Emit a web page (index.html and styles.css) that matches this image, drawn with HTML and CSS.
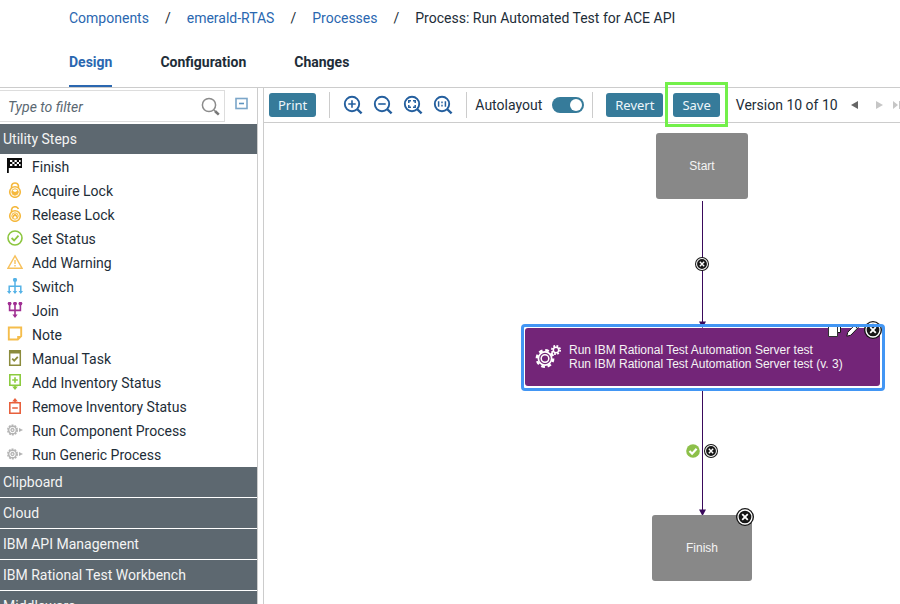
FILE: index.html
```html
<!DOCTYPE html>
<html lang="en">
<head>
<meta charset="utf-8">
<title>Process: Run Automated Test for ACE API</title>
<link rel="stylesheet" href="styles.css">
</head>
<body>
<svg class="defs" aria-hidden="true">
  <defs>
    <symbol id="close" viewBox="0 0 18 18">
      <circle cx="9" cy="9" r="9" fill="#161616"/>
      <circle cx="9" cy="9" r="7" fill="#161616" stroke="#fff" stroke-width="1.3"/>
      <path d="M6.2 6.2l5.6 5.6M11.8 6.2l-5.6 5.6" stroke="#fff" stroke-width="1.8"/>
    </symbol>
    <symbol id="lens" viewBox="0 0 20 20">
      <circle cx="9" cy="9" r="7.2" fill="none" stroke="currentColor" stroke-width="1.9"/>
      <path d="M14 14l4.6 4.4" stroke="currentColor" stroke-width="2.4"/>
    </symbol>
    <symbol id="run" viewBox="0 0 16 16">
      <circle cx="5.5" cy="8" r="4.7" fill="none" stroke="#b4b4b4" stroke-width="1.6" stroke-dasharray="1.9 1.05"/>
      <circle cx="5.5" cy="8" r="3.8" fill="none" stroke="#b4b4b4" stroke-width="1.4"/>
      <circle cx="5.5" cy="8" r="1.5" fill="none" stroke="#b4b4b4" stroke-width="1.3"/>
      <path d="M12 6l4 2-4 2z" fill="#b4b4b4"/>
    </symbol>
  </defs>
</svg>

<header class="header">
  <nav class="crumbs" aria-label="Breadcrumb">
    <a href="#">Components</a><span>/</span><a href="#">emerald-RTAS</a><span>/</span><a href="#">Processes</a><span>/</span><b>Process: Run Automated Test for ACE API</b>
  </nav>
  <nav class="tabs" aria-label="Sections">
    <a class="tab current" href="#">Design</a>
    <a class="tab" href="#">Configuration</a>
    <a class="tab" href="#">Changes</a>
  </nav>
</header>

<main class="main">
  <aside class="sidebar">
    <div class="filter">
      <div class="filter-box">
        <input type="text" placeholder="Type to filter" aria-label="Type to filter">
        <svg width="20" height="20" viewBox="0 0 20 20"><circle cx="8" cy="8" r="6.6" fill="none" stroke="#8b8b8b" stroke-width="1.5"/><path d="M13 13l1.6 1.6" stroke="#8b8b8b" stroke-width="1.5"/><path d="M14.2 14.2l3.6 3.4" stroke="#777" stroke-width="2.6"/></svg>
      </div>
      <button class="collapse" type="button" aria-label="Collapse all">
        <svg width="14" height="14" viewBox="0 0 14 14"><rect x="1" y="1.5" width="11" height="10" fill="none" stroke="#7ba6c9" stroke-width="1.6"/><path d="M4 6.5h5" stroke="#5f95c0" stroke-width="1.6"/></svg>
      </button>
    </div>
    <button class="section" type="button">Utility Steps</button>
    <ul class="steps">
      <li><svg viewBox="0 0 16 16"><path d="M0 0h15v10H1.8v5H0z" fill="#0b0b0b"/><path d="M3 2h2.300v2H3zM7.500 2h2.300v2H7.500zM12 2h1.600v2H12zM5.300 4h2.200v2H5.300zM9.800 4H12v2H9.800zM3 6h2.300v2H3zM7.500 6h2.300v2H7.500zM12 6h1.600v2H12z" fill="#fff"/></svg>Finish</li>
      <li><svg viewBox="0 0 16 16"><g fill="none" stroke="#f5b83d"><path d="M4.600 6V3.400a3.500 3.200 0 0 1 6.800 0V6" stroke-width="1.600"/><circle cx="8" cy="10" r="5.300" stroke-width="1.600"/><circle cx="8" cy="10" r="3.200" stroke-width="1"/></g><path d="M5 8.500l3 1.600 3-1.600a3.200 3.200 0 0 1-6 2.600z" fill="#f5b83d"/></svg>Acquire Lock</li>
      <li><svg viewBox="0 0 16 16"><g fill="none" stroke="#f5b83d"><path d="M4.600 6V3.400a3.500 3.200 0 0 1 6.800-.4" stroke-width="1.600"/><circle cx="8" cy="10" r="5.300" stroke-width="1.600"/><circle cx="8" cy="10" r="3.200" stroke-width="1"/></g><path d="M5 12l1-3 2-1.500L10 9l1 3-2-.5-.4-1.500H7.400L7 11.500z" fill="#f5b83d"/></svg>Release Lock</li>
      <li><svg viewBox="0 0 16 16"><circle cx="8" cy="8" r="7" fill="none" stroke="#8cc63f" stroke-width="1.600"/><path d="M4.600 8l2.500 2.500 4.400-4.800" fill="none" stroke="#8cc63f" stroke-width="1.800"/></svg>Set Status</li>
      <li><svg viewBox="0 0 16 16"><path d="M8 1.800l7 12.400H1z" fill="none" stroke="#f7c15c" stroke-width="1.400"/><path d="M8 6v4M8 11v1.600" stroke="#f7c15c" stroke-width="1.400"/></svg>Add Warning</li>
      <li><svg viewBox="0 0 16 16"><circle cx="8" cy="1.900" r="2.100" fill="#55b2e6"/><path d="M8 3v12M2.200 13.500V8.200h11.600v5.300" fill="none" stroke="#55b2e6" stroke-width="1.500"/><path d="M0 13h4.400l-2.200 3zM5.800 13h4.400L8 16zM11.600 13H16l-2.200 3z" fill="#55b2e6"/></svg>Switch</li>
      <li><svg viewBox="0 0 16 16"><g fill="#a02f92"><circle cx="2.600" cy="1.600" r="1.900"/><circle cx="8" cy="1.600" r="1.900"/><circle cx="13.400" cy="1.600" r="1.900"/><path d="M5.400 12.500h5.200L8 16z"/></g><path d="M2.600 2v6.400h10.800V2M8 2v12" fill="none" stroke="#a02f92" stroke-width="1.600"/></svg>Join</li>
      <li><svg viewBox="0 0 16 16"><path d="M1.800 1.500h12.400v8.700l-3.400 3.300h-9z" fill="none" stroke="#f5bd4c" stroke-width="1.900"/><path d="M10.200 14v-4h4z" fill="#f5bd4c"/></svg>Note</li>
      <li><svg viewBox="0 0 16 16"><path d="M2.700 1h10.600v14.200H2.700z" fill="none" stroke="#8b8b3c" stroke-width="1.500"/><path d="M2 0h12v3.500H2z" fill="#8b8b3c"/><path d="M5.200 8.700l2 2 3.600-3.900" fill="none" stroke="#8b8b3c" stroke-width="1.700"/></svg>Manual Task</li>
      <li><svg viewBox="0 0 16 16"><path d="M2.800.8h10.400v10.400H2.800zM8 3.200v5.600M5.200 6h5.600M8 11v3" fill="none" stroke="#8ccb3f" stroke-width="1.600"/><path d="M5.200 12.500h5.600L8 16z" fill="#8ccb3f"/></svg>Add Inventory Status</li>
      <li><svg viewBox="0 0 16 16"><path d="M2.800 4.800h10.400v10.400H2.800zM5.200 10h5.600M8 5V2" fill="none" stroke="#e8603c" stroke-width="1.600"/><path d="M5.200 3.400h5.600L8 0z" fill="#e8603c"/></svg>Remove Inventory Status</li>
      <li><svg viewBox="0 0 16 16"><use href="#run"/></svg>Run Component Process</li>
      <li><svg viewBox="0 0 16 16"><use href="#run"/></svg>Run Generic Process</li>
    </ul>
    <button class="section" type="button">Clipboard</button>
    <button class="section" type="button">Cloud</button>
    <button class="section" type="button">IBM API Management</button>
    <button class="section" type="button">IBM Rational Test Workbench</button>
    <button class="section" type="button">Middleware</button>
  </aside>

  <section class="editor">
    <div class="toolbar">
      <button class="btn" type="button">Print</button>
      <div class="group zooms">
        <button class="tool" type="button" aria-label="Zoom in"><svg viewBox="0 0 20 20"><use href="#lens"/><path d="M5.300 9h7.400M9 5.300v7.400" stroke="currentColor" stroke-width="1.600"/></svg></button>
        <button class="tool" type="button" aria-label="Zoom out"><svg viewBox="0 0 20 20"><use href="#lens"/><path d="M5.300 9h7.400" stroke="currentColor" stroke-width="1.600"/></svg></button>
        <button class="tool" type="button" aria-label="Zoom to fit"><svg viewBox="0 0 20 20"><use href="#lens"/><path d="M5.800 8V5.800H8M10 5.800h2.200V8M12.200 10v2.200H10M8 12.200H5.800V10" fill="none" stroke="currentColor" stroke-width="1.500"/></svg></button>
        <button class="tool" type="button" aria-label="Actual size"><svg viewBox="0 0 20 20"><use href="#lens"/><path d="M5.600 6.200v5.600M12.400 6.200v5.600" stroke="currentColor" stroke-width="1.500"/><path d="M9 6.500v1.800M9 9.800v1.800" stroke="currentColor" stroke-width="1.400"/></svg></button>
      </div>
      <div class="group auto">
        <label for="auto">Autolayout</label>
        <input id="auto" class="toggle" type="checkbox" checked>
      </div>
      <div class="group actions">
        <button class="btn" type="button">Revert</button>
        <span class="callout"><button class="btn" type="button">Save</button></span>
      </div>
      <div class="version">
        <span>Version 10 of 10</span>
        <button class="step" type="button" aria-label="Previous version"><svg viewBox="0 0 8 8"><path d="M7 0v8L0 4z" fill="#666"/></svg></button>
        <button class="step" type="button" aria-label="Next version"><svg viewBox="0 0 8 8"><path d="M1 0v8l7-4z" fill="#c6c6c6"/></svg></button>
        <button class="step last" type="button" aria-label="Latest version"><svg viewBox="0 0 8 8"><path d="M0 0v8l5-4zM6 0h2v8H6z" fill="#c6c6c6"/></svg></button>
      </div>
    </div>

    <div class="canvas">
      <svg class="edges" width="100%" height="100%" aria-hidden="true">
        <path d="M438.500 78v122M438.500 266v122" stroke="#3a0a5c"/>
        <path d="M435 198.500h7l-3.500 6.500zM435 386.500h7l-3.500 6.500z" fill="#3a0a5c"/>
      </svg>
      <div class="node start">Start</div>
      <div class="node task">
        <svg class="gears" width="28" height="28" viewBox="0 0 28 28" fill="none" stroke="#fff">
          <circle cx="11" cy="15.500" r="8.200" stroke-width="2.400" stroke-dasharray="3.700 2.740"/>
          <circle cx="11" cy="15.500" r="6.600" stroke-width="1.700"/>
          <circle cx="11" cy="15.500" r="3.800" stroke-width="1.500"/>
          <circle cx="22" cy="7" r="4.100" stroke-width="1.800" stroke-dasharray="1.800 1.420"/>
          <circle cx="22" cy="7" r="2.700" stroke-width="1.500"/>
        </svg>
        <div>Run IBM Rational Test Automation Server test<br>Run IBM Rational Test Automation Server test (v. 3)</div>
      </div>
      <div class="node finish">Finish</div>
      <div class="node-tools">
        <svg width="14" height="14" viewBox="0 0 14 14"><path d="M3.500 1.500h9v8h-9z" fill="#fff" stroke="#161616"/><path d="M.5 3.500h9v10h-9z" fill="#fff" stroke="#333"/></svg>
        <svg width="14" height="14" viewBox="0 0 14 14"><path d="M.8 13.200l1-4L9.500 1.200l3 3-7.700 8z" fill="#fff" stroke="#161616"/><path d="M8.300 2.400l3 3" stroke="#161616"/></svg>
        <svg width="18" height="18"><use href="#close"/></svg>
      </div>
      <div class="selection"></div>
      <svg class="mark drop-first" width="14" height="14"><use href="#close"/></svg>
      <svg class="mark ok" width="14" height="14" viewBox="0 0 14 14"><circle cx="7" cy="7" r="6.800" fill="#8dc04a"/><path d="M3.500 7l2.600 2.700 4.500-4.900" fill="none" stroke="#fff" stroke-width="2.200"/></svg>
      <svg class="mark drop-second" width="14" height="14"><use href="#close"/></svg>
      <svg class="mark drop-finish" width="18" height="18"><use href="#close"/></svg>
    </div>
  </section>
</main>
</body>
</html>
```
FILE: styles.css
```css
* { box-sizing: border-box; }

body {
  margin: 0;
  height: 100vh;
  overflow: hidden;
  display: flex;
  flex-direction: column;
  background: #fff;
  color: #1d2d38;
  font: 14px/20px Roboto, "Liberation Sans", sans-serif;
}

button, input { font: inherit; margin: 0; }
button { border: 0; padding: 0; background: none; cursor: pointer; }
a { color: #2a67b0; text-decoration: none; }
svg { display: block; flex: none; }
.defs { position: absolute; width: 0; height: 0; }

.header {
  padding: 8px 0 0 69px;
  border-bottom: 1px solid #ccc;
}
.crumbs { display: flex; gap: 16px; }
.crumbs b { font-weight: 400; }
.tabs { display: flex; gap: 48px; margin-top: 24px; }
.tab {
  height: 35px;
  color: #1d2d38;
  font-weight: 700;
  border-bottom: 2px solid transparent;
}
.tab.current { color: #2a67b0; border-color: #2a67b0; }

.main { flex: 1; min-height: 0; display: flex; gap: 5px; }

.sidebar {
  width: 258px;
  flex: none;
  overflow: hidden;
  border-right: 1px solid #ccc;
}
.filter { display: flex; gap: 10px; padding: 2px 0; }
.filter-box {
  flex: 0 0 225px;
  height: 32px;
  display: flex;
  align-items: center;
  border: 1px solid #ddd;
  border-left: 0;
  padding: 2px 3px 0 0;
}
.filter-box input {
  flex: 1;
  min-width: 0;
  border: 0;
  outline: 0;
  padding: 0 8px;
  background: none;
}
.filter-box input::placeholder { color: #5a6872; font-style: italic; opacity: 1; }
.collapse { align-self: flex-start; margin-top: 7px; }

.section {
  display: block;
  width: 100%;
  height: 30px;
  margin-bottom: 1px;
  padding: 0 3px;
  background: #5d6870;
  color: #f4f4f4;
  text-align: left;
}

.steps { list-style: none; margin: 0; padding: 0; }
.steps li {
  display: flex;
  align-items: center;
  gap: 9px;
  height: 24px;
  padding-left: 7px;
}
.steps svg { width: 16px; height: 16px; margin-bottom: 2px; }

.editor {
  flex: 1;
  min-width: 0;
  display: flex;
  flex-direction: column;
  border-left: 1px solid #ccc;
}
.toolbar {
  flex: none;
  height: 35px;
  display: flex;
  align-items: center;
  padding-left: 5px;
  border-bottom: 1px solid #ccc;
  white-space: nowrap;
}
.btn {
  height: 24px;
  padding: 0 9px;
  border-radius: 3px;
  background: #367b9a;
  color: #eef6fa;
  font: 13px/22px "Noto Sans", "Open Sans", sans-serif;
}
.group {
  display: flex;
  align-items: center;
  height: 26px;
  border-left: 1px solid #ccc;
}
.zooms { gap: 10px; margin-left: 13px; padding: 0 13px; }
.tool { color: #245f9e; }
.tool svg { width: 20px; height: 20px; }
.auto { gap: 10px; padding: 0 8px; }
.toggle {
  appearance: none;
  width: 32px;
  height: 16px;
  padding: 2px;
  border-radius: 8px;
  background: #367b9a;
  display: flex;
  justify-content: flex-end;
}
.toggle::before {
  content: "";
  width: 12px;
  height: 12px;
  border-radius: 50%;
  background: #fff;
}
.actions { padding-left: 13px; gap: 10px; }
.callout { position: relative; display: flex; }
.callout::after {
  content: "";
  position: absolute;
  z-index: 2;
  inset: -11px -8px -10px;
  border: 3px solid #73f04a;
  pointer-events: none;
}
.version { display: flex; align-items: center; gap: 16px; margin-left: 16px; }
.version svg { width: 8px; height: 8px; }
.version span { margin-right: -3px; }
.last { margin-left: -6px; }

/* Diagram surface: every item below is placed by its own coordinates. */
.canvas {
  position: relative;
  flex: 1;
  overflow: hidden;
  font: 12px/14px "Liberation Sans", Arial, sans-serif;
}
.edges { position: absolute; inset: 0; }
.node {
  position: absolute;
  display: flex;
  align-items: center;
  justify-content: center;
  height: 66px;
  border-radius: 3px;
  background: #888;
  color: #f4f4f4;
}
.start { left: 392px; top: 10px; width: 92px; }
.finish { left: 388px; top: 392px; width: 100px; }
.task {
  left: 261px;
  top: 205px;
  width: 355px;
  height: 58px;
  justify-content: flex-start;
  gap: 7px;
  padding-left: 9px;
  background: #732578;
  white-space: nowrap;
}
.selection {
  position: absolute;
  left: 257px;
  top: 201px;
  width: 364px;
  height: 67px;
  border: 3px solid #4296f4;
  border-radius: 4px;
}
.node-tools {
  position: absolute;
  left: 564px;
  top: 198px;
  display: flex;
  align-items: center;
  gap: 4px;
}
.mark { position: absolute; }
.drop-first { left: 431px; top: 134px; }
.ok { left: 422px; top: 321px; }
.drop-second { left: 440px; top: 321px; }
.drop-finish { left: 472px; top: 385px; }
```
